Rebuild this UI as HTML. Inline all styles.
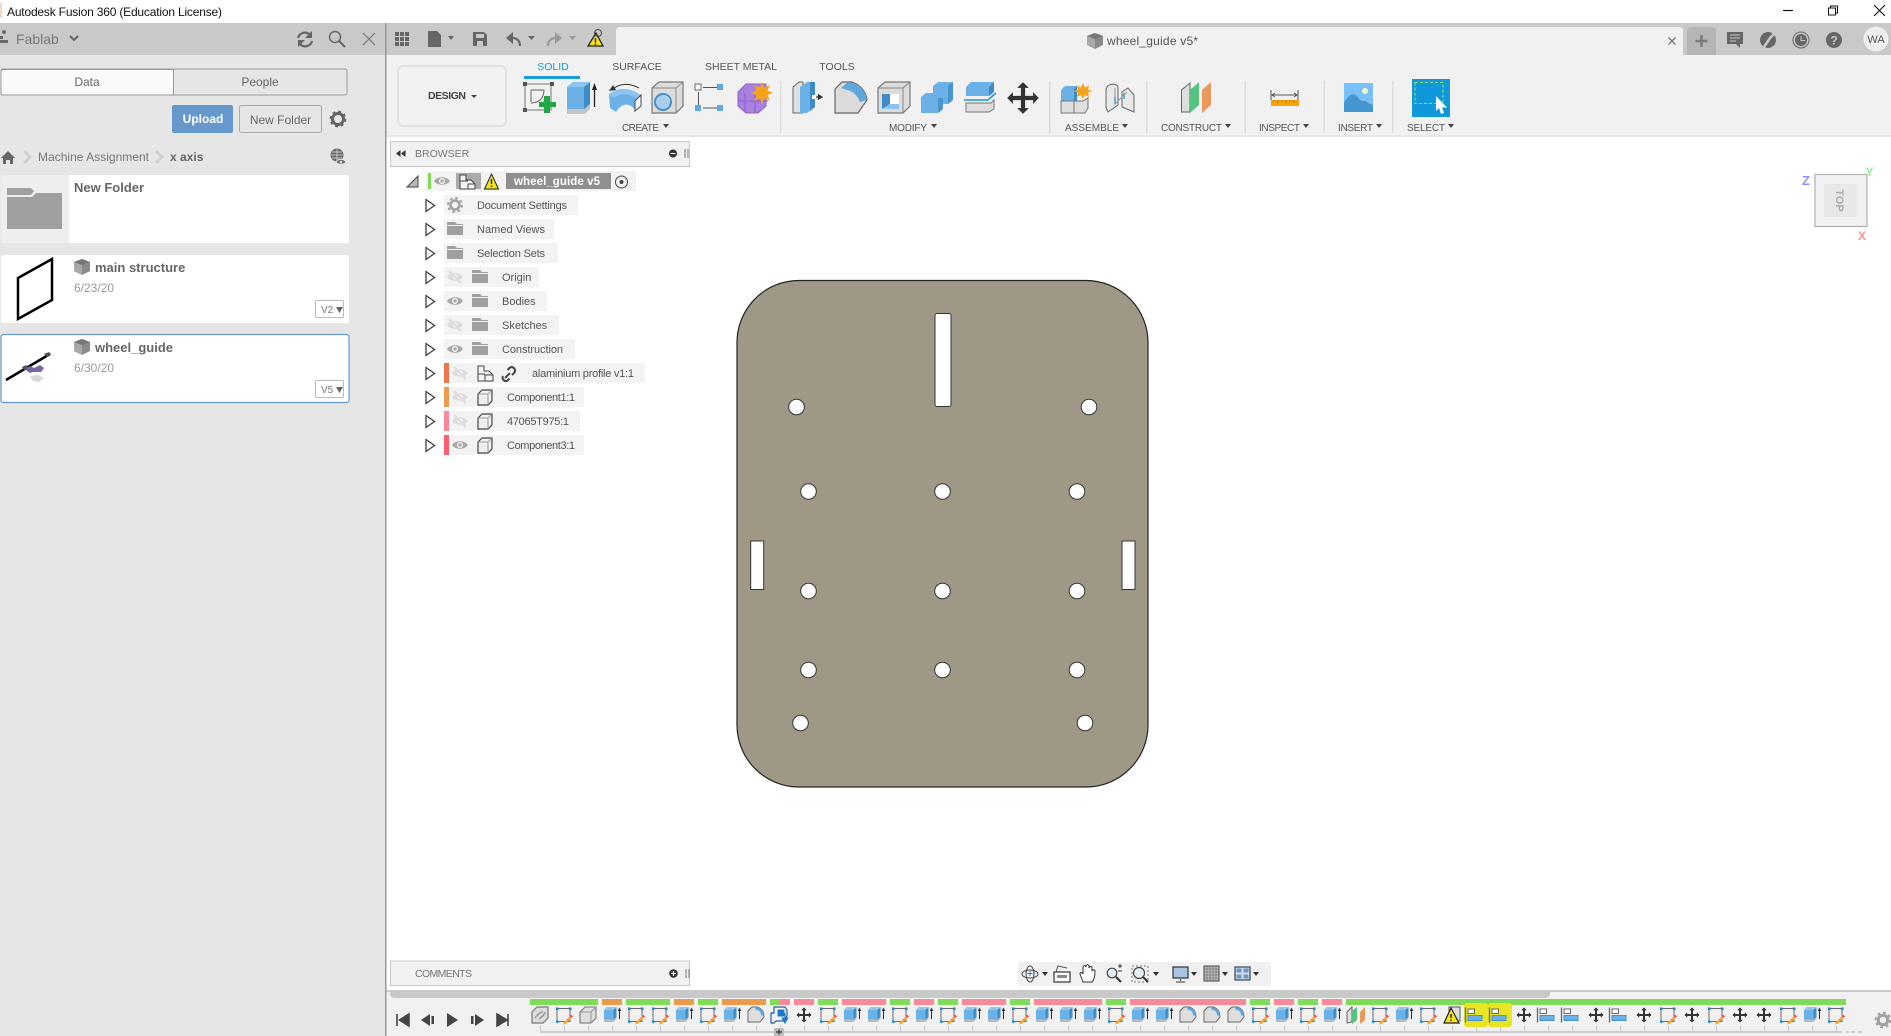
<!DOCTYPE html>
<html><head><meta charset="utf-8"><title>Autodesk Fusion 360</title>
<style>
html,body{margin:0;padding:0;background:#fff;width:1891px;height:1036px;overflow:hidden}
svg{display:block;position:absolute;left:0;top:0}
text{font-family:"Liberation Sans",sans-serif;font-size:11px;fill:#555}
.c{text-anchor:middle}
.tab{font-size:10.500px;fill:#555;text-anchor:middle}
.lb{font-size:10px;fill:#555}
.n{font-size:13px;font-weight:bold;fill:#666}
.d{font-size:12px;fill:#999}
</style></head><body>
<svg width="1891" height="1036" viewBox="0 0 1891 1036" xmlns="http://www.w3.org/2000/svg">
<defs>
<g id="sk"><path d="M-6 -6.500H7V6.500H-6Z" fill="none" stroke="#666" stroke-width="1"/><path d="M-7 -7.500h2.500v2.500h-2.500zM6 -7.500h2.500v2.500h-2.500zM-7 5.500h2.500v2.500h-2.500z" fill="#1e88d8"/><path d="M1 7l6-6 1.800 1.800-6 6-2.600.8z" fill="#f0a43c"/><path d="M7 1l1.300-1.300 1.800 1.800-1.300 1.300z" fill="#ec4a5a"/></g>
<g id="ex"><path d="M-8 -5L-5 -8H4.500V2L1.500 4.500H-8Z" fill="#6bb0e6"/><path d="M1.500 -5L4.500 -8V2L1.500 4.500Z" fill="#3d8cc8"/><path d="M-8 -5L-5 -8H4.500L1.500 -5Z" fill="#8fc6f0"/><path d="M-8 4.500H1.500L4.500 2V4L1.500 7H-8Z" fill="#bdbdbd"/><path d="M7.500 4V-6.500" stroke="#333" stroke-width="1.100"/><path d="M5.700 -4L7.500 -7.500L9.300 -4Z" fill="#333"/></g>
<g id="fi"><path d="M-8 -4L-4 -8H1C6 -6.500 8 -3 8 2L4 7H-8Z" fill="#dedede" stroke="#666" stroke-width="1"/><path d="M0 -8C5 -7 8 -4 8 1L5 0C5 -3 3 -5 -1 -5.500Z" fill="#5fa5dc"/></g>
<g id="mv"><path d="M0 -7.500L-2.800 -4.800H-1V-1H-4.800V-2.800L-7.500 0L-4.800 2.800V1H-1V4.800H-2.800L0 7.500L2.800 4.800H1V1H4.800V2.800L7.500 0L4.800 -2.800V-1H1V-4.800H2.800Z" fill="#333"/></g>
<g id="al"><path d="M-10.500 -7.500V7.500" stroke="#666" stroke-width="1.300"/><rect x="-8" y="-6" width="6.500" height="4.500" fill="#fff" stroke="#666"/><rect x="-8" y="0.500" width="14" height="5" fill="#6bb0e6" stroke="#4a90c8"/></g>
<g id="eye"><path d="M-8 0C-5 -5 5 -5 8 0C5 5 -5 5 -8 0Z" fill="#a8a8a8"/><circle r="3" fill="#f3f3f3"/><circle r="1.600" fill="#a8a8a8"/></g>
<g id="eyo"><path d="M-8 0C-5 -5 5 -5 8 0C5 5 -5 5 -8 0Z" fill="#dcdcdc"/><circle r="2.500" fill="#f3f3f3"/><path d="M-6 -6L6 6" stroke="#dcdcdc" stroke-width="2"/></g>
<g id="fo"><path d="M-8 -7H0L2 -5H8V-4H-8Z" fill="#a0a0a0"/><path d="M-8 -3H8V6H-8Z" fill="#a0a0a0"/></g>
<g id="exp"><path d="M-4 -6L4.500 0L-4 6Z" fill="#f8f8f8" stroke="#444" stroke-width="1.300"/></g>
<g id="cp"><path d="M-7 -3L-3 -7H7V4L3 8H-7Z" fill="#f0f0f0" stroke="#444" stroke-width="1.200"/><path d="M-7 -3H3V8M3 -3L7 -7" fill="none" stroke="#999"/></g>
<g id="cube"><path d="M0 -8L8 -5V4L0 8L-8 4V-5Z" fill="#8a8a8a"/><path d="M-8 -5L0 -2V8L-8 4Z" fill="#a8a8a8"/><path d="M0 -8L8 -5L0 -2L-8 -5Z" fill="#777"/></g>
</defs>

<!-- title bar -->
<rect width="1891" height="23" fill="#fff"/>
<rect x="0" y="3" width="2" height="15" fill="#f6d9c0"/>
<text x="7" y="16" style="font-size:12px;fill:#111" textLength="215">Autodesk Fusion 360 (Education License)</text>
<path d="M1783 10.500H1793" stroke="#111" stroke-width="1.200"/>
<path d="M1828.500 8H1835.500V15H1828.500ZM1830.500 8V6H1837.500V13H1835.500" fill="#fff" stroke="#111"/>
<path d="M1874 5L1885 16M1885 5L1874 16" stroke="#111" stroke-width="1.100"/>

<!-- left panel -->
<rect x="0" y="23" width="385" height="1013" fill="#e6e6e6"/>
<rect x="0" y="23" width="385" height="32" fill="#c9c9c9"/>
<rect x="385" y="23" width="1.500" height="1013" fill="#999"/>
<path d="M0 36h3v3H0zM4 34a2 2 0 1 1 .1 0zM0 40h8v3H0z" fill="#666"/>
<text x="16" y="44" style="font-size:14px;fill:#777">Fablab</text>
<path d="M70 36L74 40L78 36" fill="none" stroke="#666" stroke-width="2"/>
<path d="M298 38A7 7 0 0 1 310 35M312 41A7 7 0 0 1 300 44" fill="none" stroke="#666" stroke-width="2.200"/><path d="M312 31V38H305ZM298 47V40H305Z" fill="#666"/>
<circle cx="335" cy="37" r="5.500" fill="none" stroke="#666" stroke-width="1.500"/><path d="M339 41L345 47" stroke="#666" stroke-width="2"/>
<path d="M363 33L375 45M375 33L363 45" stroke="#777" stroke-width="1.200"/>

<rect x="1" y="69" width="346" height="26" rx="2" fill="#e6e6e6" stroke="#999"/>
<path d="M3 69.500H173.500V95H3A2 2 0 0 1 1 93V71.500A2 2 0 0 1 3 69.500Z" fill="#fafafa" stroke="#999"/>
<text x="87" y="86" class="c" style="font-size:12px;fill:#666">Data</text>
<text x="260" y="86" class="c" style="font-size:12px;fill:#666">People</text>
<rect x="172" y="105" width="61" height="28" rx="2" fill="#6698cc"/>
<text x="203" y="123" class="c" style="font-size:12px;font-weight:bold;fill:#fff">Upload</text>
<rect x="239.500" y="105.500" width="82" height="27" rx="2" fill="#e6e6e6" stroke="#aaa"/>
<text x="280.500" y="124" class="c" style="font-size:12px;fill:#666">New Folder</text>
<circle cx="338" cy="119" r="5.500" fill="none" stroke="#666" stroke-width="3"/><circle cx="338" cy="119" r="7.500" fill="none" stroke="#666" stroke-width="1.800" stroke-dasharray="2.800 3.100"/>
<path d="M1 158L8 151L15 158H13V164H10V160H6V164H3V158Z" fill="#666"/>
<path d="M24 151L30 157L24 163" fill="none" stroke="#d0d0d0" stroke-width="3"/>
<text x="38" y="161" style="font-size:12px;fill:#777" textLength="111">Machine Assignment</text>
<path d="M156 151L162 157L156 163" fill="none" stroke="#d0d0d0" stroke-width="3"/>
<text x="170" y="161" style="font-size:12px;font-weight:bold;fill:#666">x axis</text>
<circle cx="337" cy="155" r="6.500" fill="#666"/><path d="M331 155H343M337 149V161M332 152H342M332 158H342" stroke="#e6e6e6" stroke-width=".7"/>
<path d="M336 162C338 158.500 344 158.500 346 162C344 165 338 165 336 162Z" fill="#666" stroke="#e6e6e6"/><circle cx="341" cy="162" r="1.300" fill="#e6e6e6"/>

<!-- cards -->
<rect x="1" y="175" width="348" height="68" rx="2" fill="#fff"/>
<path d="M69 175H3a2 2 0 0 0-2 2V241a2 2 0 0 0 2 2H69Z" fill="#eee"/>
<path d="M7 188H31L34 191L31 195H7ZM7 193V229H62V193H36L32 197H7Z" fill="#a0a0a0"/><path d="M7 195.500H31.500L34 193" fill="none" stroke="#eee"/>
<text x="74" y="192" class="n">New Folder</text>

<rect x="1" y="255" width="348" height="68" rx="2" fill="#fff"/>
<path d="M18 278L52 259V300L18 319Z" fill="none" stroke="#000" stroke-width="2.500"/>
<use href="#cube" x="82" y="267"/>
<text x="95" y="272" class="n">main structure</text>
<text x="74" y="292" class="d">6/23/20</text>
<rect x="315.500" y="300.500" width="28" height="17" rx="1" fill="#fff" stroke="#bbb"/>
<text x="321" y="313" style="font-size:10px;fill:#777">V2</text>
<path d="M336 307H343L339.500 313Z" fill="#666"/>

<rect x="1" y="334.500" width="348" height="68" rx="2.500" fill="#fff" stroke="#6698cc" stroke-width="1.200"/>
<path d="M6 380L50 354" stroke="#000" stroke-width="2.500"/><path d="M44 354l5-2 2 2-4 3z" fill="#555"/>
<path d="M24 369l6-3 4 2 6-3 4 3-3 4-8 0-3 1z" fill="#7a64a8"/><path d="M30 376l8-1 6 3-5 4-6-1z" fill="#d8d8d8"/><path d="M22 367l4-2 2 3-4 2z" fill="#555"/>
<use href="#cube" x="82" y="347"/>
<text x="95" y="352" class="n">wheel_guide</text>
<text x="74" y="372" class="d">6/30/20</text>
<rect x="315.500" y="380.500" width="28" height="17" rx="1" fill="#fff" stroke="#bbb"/>
<text x="321" y="393" style="font-size:10px;fill:#777">V5</text>
<path d="M336 387H343L339.500 393Z" fill="#666"/>

<!-- top gray strip -->
<rect x="386.500" y="23" width="1505" height="32" fill="#c9c9c9"/>
<path d="M616 55V31Q616 27 620 27H1679Q1683 27 1683 31V55Z" fill="#f1f1f1"/>
<path d="M1687 55V31Q1687 27 1691 27H1712Q1716 27 1716 31V55Z" fill="#b5b5b5"/>
<path d="M1701.500 35V47M1695.500 41H1707.500" stroke="#7a7a7a" stroke-width="2.500"/>
<path d="M1668.500 37.500L1675.500 44.500M1675.500 37.500L1668.500 44.500" stroke="#777" stroke-width="1.300"/>
<path d="M395 32h4v4h-4zM400 32h4v4h-4zM405 32h4v4h-4zM395 37h4v4h-4zM400 37h4v4h-4zM405 37h4v4h-4zM395 42h4v4h-4zM400 42h4v4h-4zM405 42h4v4h-4z" fill="#666"/>
<path d="M428 31H437L441 35V47H428Z" fill="#666"/><path d="M448 36H454L451 40Z" fill="#666"/>
<path d="M473 32H484L487 35V46H473ZM476 34V38H484V34ZM477 41V46H483V41Z" fill="#666" fill-rule="evenodd"/>
<path d="M520 46C520 40 516 37 509 38" fill="none" stroke="#666" stroke-width="2.200"/><path d="M513 32L506 38L513 44Z" fill="#666"/><path d="M528 36H535L531.500 40Z" fill="#666"/>
<path d="M548 46C548 40 552 37 559 38" fill="none" stroke="#999" stroke-width="2.200"/><path d="M555 32L562 38L555 44Z" fill="#999"/><path d="M569 36H576L572.500 40Z" fill="#999"/>
<path d="M596 33L603 46H588Z" fill="#f2e21e" stroke="#222" stroke-width="1.300"/><path d="M595.500 38V42.500M595.500 43.500V45" stroke="#222" stroke-width="1.400"/><circle cx="598" cy="33" r="3.500" fill="none" stroke="#444"/>

<use href="#cube" x="1095" y="41"/>
<text x="1107" y="45" style="font-size:12px;fill:#555" textLength="91">wheel_guide v5*</text>

<path d="M1727 32H1743V44H1740V48L1736 44H1727Z" fill="#666"/><path d="M1730 35H1740M1730 38H1740M1730 41H1736" stroke="#c9c9c9"/>
<circle cx="1768" cy="40" r="8" fill="#666"/><path d="M1764 47L1770 38L1774 34" stroke="#c9c9c9" stroke-width="2.500"/>
<circle cx="1801" cy="40" r="8" fill="none" stroke="#666"/><circle cx="1801" cy="40" r="6" fill="#666"/><path d="M1801 36V40.500H1805" fill="none" stroke="#c9c9c9"/>
<circle cx="1834" cy="40" r="8" fill="#666"/><text x="1834" y="44.500" class="c" style="font-size:12px;font-weight:bold;fill:#c9c9c9">?</text>
<circle cx="1876" cy="39" r="12.500" fill="#eee"/><text x="1876" y="43" class="c" style="font-size:11px;fill:#555">WA</text>

<!-- toolbar -->
<rect x="386.500" y="55" width="1505" height="81" fill="#f1f1f1"/>
<rect x="386.500" y="135.500" width="1505" height="1.200" fill="#ddd"/>
<rect x="398" y="66" width="108" height="60" rx="5" fill="#f1f1f1" stroke="#ddd" stroke-width="1.500"/>
<text x="428" y="99" style="font-size:10.500px;font-weight:bold;fill:#444" textLength="38">DESIGN</text><path d="M471 95H477L474 98Z" fill="#444"/>

<text x="553" y="70" class="tab" style="fill:#1a9ad6">SOLID</text>
<rect x="524" y="76" width="56" height="3" fill="#1a9ad6"/>
<text x="637" y="70" class="tab">SURFACE</text>
<text x="741" y="70" class="tab">SHEET METAL</text>
<text x="837" y="70" class="tab">TOOLS</text>

<!-- create icons -->
<path d="M525 84H551V110H525Z" fill="none" stroke="#777" stroke-width="1"/>
<path d="M523 82h4v4h-4zM550 82h4v4h-4zM523 108h4v4h-4z" fill="#555"/>
<path d="M531 90V102M531 90H544M544 90C544 98 539 103 531 103" fill="none" stroke="#666"/>
<path d="M544 96h6v6h6v5h-6v6h-6v-6h-5v-5h5z" fill="#22a745"/>
<path d="M567 87L573 82H590V104L585 109H567Z" fill="#6bb0e6"/><path d="M584 87L590 82V104L584 109Z" fill="#3d8cc8"/><path d="M567 87L573 82H590L584 87Z" fill="#8cc4f0"/><path d="M567 109H585L590 105V109L585 114H567Z" fill="#c4c4c4"/>
<path d="M594.500 107V88" stroke="#222" stroke-width="1.300"/><path d="M592 90L594.500 83L597 90Z" fill="#222"/>
<path d="M609 94C617 87 632 87 641 96L635 110C630 102 621 103 616 112L610 108Z" fill="#6bb0e6"/><path d="M609 94C617 87 632 87 641 96L637 99C630 93 620 93 613 98Z" fill="#8cc4f0"/><path d="M635 101L641 95V106L635 111Z" fill="#fff" stroke="#444"/>
<path d="M613 89C620 83 630 83 639 88" fill="none" stroke="#333" stroke-width="1"/><path d="M609 91L613 85L616 90Z" fill="#333"/>
<path d="M652 88L659 82H683V106L676 113H652Z" fill="#dcdcdc" stroke="#777" stroke-width="1.200"/><path d="M652 88H676V113M676 88L683 82" fill="none" stroke="#888"/>
<circle cx="663" cy="102" r="8" fill="#a8d0ee" stroke="#4a90c8" stroke-width="2"/><path d="M663 95A7 7 0 0 1 670 102A9 9 0 0 0 663 95Z" fill="#fff"/>
<path d="M703 87.500H717M698.500 92V105M703 108H717" stroke="#555" stroke-width="1"/>
<rect x="695" y="84" width="6" height="6" fill="#fff" stroke="#666"/>
<path d="M717 84h6v6h-6zM695 105h6v6h-6zM717 105h6v6h-6z" fill="#5fa8e0"/>
<path d="M738 92L746 84H766V106L758 113H746L738 106Z" fill="#a880e0" stroke="#8a62c8"/><path d="M745 93V112M738 101H768M755 93V112" stroke="#8a62c8"/>
<path d="M762 82L764.500 87.500L770 85L767.500 90.500L773 93L767.500 95L770 101L764.500 98L762 104L760 98L754 101L756.500 95L751 93L756.500 90.500L754 85L760 87.500Z" fill="#f6a31c"/>
<text x="622" y="131" class="lb" textLength="37">CREATE</text><path d="M663 124H669L666 128Z" fill="#444"/>
<rect x="780" y="81" width="1.500" height="52" fill="#ddd"/>

<!-- modify icons -->
<path d="M793 87L799 82H803V113H793Z" fill="#e0e0e0" stroke="#666"/><path d="M800 87L807 82H815V107L807 113H800Z" fill="#6bb0e6"/><path d="M810 82H815V107L810 111Z" fill="#3d8cc8"/>
<path d="M812 97H822M818 94.500L822 97L818 99.500" fill="#333" stroke="#333" stroke-width="1.200"/><rect x="812" y="95" width="4" height="4" fill="#fff"/>
<path d="M835 89L842 82H852C860 85 866 91 867 100L858 113H835Z" fill="#dcdcdc" stroke="#666" stroke-width="1.200"/><path d="M848 82C858 83 866 90 867 100L860 102C858 96 853 91 847 90L841 88Z" fill="#5fa8dc"/>
<path d="M878 88L885 82H910V106L903 113H878Z" fill="#dcdcdc" stroke="#777" stroke-width="1.200"/><path d="M878 88H903V113M903 88L910 82" fill="none" stroke="#888"/>
<rect x="882" y="94" width="17" height="15" fill="#fff"/><path d="M882 94H890V104L882 109Z" fill="#3d8cc8"/><path d="M882 109L890 104H899V109Z" fill="#8cc4f0"/>
<path d="M921 97L926 93H933V86L938 82H953V100L948 104H943V109L938 113H921Z" fill="#6bb0e6"/><path d="M948 86L953 82V100L948 104Z" fill="#4a94cc"/><path d="M938 98L943 98V109L938 113Z" fill="#4a94cc"/>
<path d="M966 87L971 82H994V92L989 96H966Z" fill="#6bb0e6"/><path d="M989 87L994 82V92L989 96Z" fill="#3d8cc8"/>
<path d="M964 100H988L996 93" fill="none" stroke="#1a9ad6" stroke-width="1.500"/>
<path d="M966 103H991L994 100V109L989 112H966Z" fill="#dedede" stroke="#777"/>
<use href="#mv" transform="translate(1023,98) scale(2.100)"/>
<text x="889" y="131" class="lb" textLength="38">MODIFY</text><path d="M931 124H937L934 128Z" fill="#444"/>
<rect x="1049" y="81" width="1.500" height="52" fill="#ddd"/>

<!-- assemble -->
<path d="M1061 90L1065 86H1077V101H1061Z" fill="#6bb0e6"/><path d="M1074 89L1077 86V101L1074 101Z" fill="#3d8cc8"/><path d="M1061 101H1074V113H1061Z" fill="#dedede" stroke="#777"/><path d="M1074 101H1083L1088 98V108L1085 113H1074Z" fill="#dedede" stroke="#777"/>
<path d="M1083 83L1085 87.500L1089 85.500L1088 90L1093 91L1088 92.500L1089 97L1085 95L1083 99L1081 95L1077 97L1078 92.500L1073 91L1078 90L1077 85.500L1081 87.500Z" fill="#f6a31c"/>
<path d="M1106 90C1106 84 1116 82 1118 87V105L1108 112L1106 107Z" fill="#e8e8e8" stroke="#666"/><path d="M1122 92V107L1134 112V95L1128 88L1122 92Z" fill="#e8e8e8" stroke="#666"/><path d="M1115 88V104L1127 92" fill="none" stroke="#999"/><path d="M1115 97V104M1124 93V99" stroke="#1a9ad6" stroke-width="1.200"/>
<text x="1065" y="131" class="lb" textLength="54">ASSEMBLE</text><path d="M1122 124H1128L1125 128Z" fill="#444"/>
<rect x="1146" y="81" width="1.500" height="52" fill="#ddd"/>

<!-- construct -->
<path d="M1181.500 90L1190 83V112H1181.500Z" fill="#dedede" stroke="#666" stroke-width="1"/>
<path d="M1190 90L1199 82V105L1190 113Z" fill="#55c47e"/>
<path d="M1202 90L1211 82V105L1202 113Z" fill="#e89a5e"/>
<text x="1161" y="131" class="lb" textLength="61">CONSTRUCT</text><path d="M1225 124H1231L1228 128Z" fill="#444"/>
<rect x="1244.500" y="81" width="1.500" height="52" fill="#ddd"/>

<!-- inspect -->
<path d="M1271 90V100M1298 90V100M1272 95H1297M1275 93L1272 95L1275 97M1294 93L1297 95L1294 97" fill="none" stroke="#555" stroke-width="1"/>
<rect x="1271" y="100" width="28" height="6" fill="#f4a40e"/><path d="M1274 100v2M1278 100v3M1282 100v2M1286 100v3M1290 100v2M1294 100v3" stroke="#a87000" stroke-width=".8"/>
<text x="1259" y="131" class="lb" textLength="41">INSPECT</text><path d="M1303 124H1309L1306 128Z" fill="#444"/>
<rect x="1323.500" y="81" width="1.500" height="52" fill="#ddd"/>

<!-- insert -->
<rect x="1344" y="83" width="29" height="29" fill="#79c0f8"/><path d="M1344 112V103C1350 92 1355 92 1360 100C1364 102 1366 100 1368 103L1373 105V112Z" fill="#4595d0"/><circle cx="1365" cy="91" r="3" fill="#f6f6c8"/>
<text x="1338" y="131" class="lb" textLength="35">INSERT</text><path d="M1376 124H1382L1379 128Z" fill="#444"/>
<rect x="1392" y="81" width="1.500" height="52" fill="#ddd"/>

<!-- select -->
<rect x="1412" y="79" width="38" height="38" fill="#0f98da"/>
<rect x="1415" y="82.500" width="28" height="21" fill="none" stroke="#8fe07e" stroke-dasharray="3 2"/>
<path d="M1436 96V111L1439 108L1441 114L1444 113L1442 107.500H1447Z" fill="#fff"/>
<text x="1407" y="131" class="lb" textLength="38">SELECT</text><path d="M1448 124H1454L1451 128Z" fill="#444"/>

<!-- view cube -->
<text x="1806" y="185" class="c" style="font-size:13px;font-weight:bold;fill:#9090ff">Z</text>
<text x="1869.500" y="176" class="c" style="font-size:12px;font-weight:bold;fill:#90f090">Y</text>
<text x="1862" y="240" class="c" style="font-size:12px;font-weight:bold;fill:#ff9090">X</text>
<rect x="1815" y="174.500" width="52" height="52" fill="#f1f1f1" stroke="#b0b0b0" stroke-width="1.200"/>
<rect x="1824" y="184" width="33" height="33" fill="#e8e8e8"/>
<text transform="translate(1836,200.500) rotate(90)" class="c" style="font-size:11px;font-weight:bold;fill:#aaa">TOP</text>

<!-- browser -->
<rect x="390.500" y="141.500" width="299" height="25" fill="#f1f1f1" stroke="#c8c8c8"/>
<path d="M396 153.500L400.500 150V157ZM401 153.500L405.500 150V157Z" fill="#333"/>
<text x="415" y="157" style="font-size:10.500px;fill:#777">BROWSER</text>
<circle cx="673" cy="153.500" r="4" fill="#333"/><path d="M670.500 153.500H675.500" stroke="#f1f1f1" stroke-width="1.200"/>
<path d="M685 149V158M688 149V158" stroke="#777"/>

<path d="M407 187L418 176V187Z" fill="#b8b8b8" stroke="#444" stroke-width="1"/>
<rect x="426" y="171" width="210" height="20" fill="#f3f3f3"/>
<rect x="428" y="173" width="3" height="16" fill="#7fdb58"/>
<use href="#eye" x="442" y="181"/>
<rect x="456" y="173" width="25" height="16" fill="#aaa"/>
<path d="M460 175H466V180H471L475 184V189H460Z" fill="#f3f3f3" stroke="#444" stroke-width="1"/><path d="M468 189V184H475M460 181H468" fill="none" stroke="#444"/>
<path d="M491.500 174L498.500 189H484.500Z" fill="#f2e21e" stroke="#222" stroke-width="1"/><path d="M491.500 179V184M491.500 185.500V187" stroke="#222" stroke-width="1.300"/>
<rect x="506" y="173" width="105" height="16" fill="#8f8f8f"/>
<text x="557" y="185" class="c" style="font-size:11.500px;font-weight:bold;fill:#fff" textLength="86">wheel_guide v5</text>
<circle cx="621.500" cy="182" r="6" fill="none" stroke="#444"/><circle cx="621.500" cy="182" r="2" fill="#444"/>

<!-- rows -->
<use href="#exp" x="430" y="205.500"/><rect x="444" y="195" width="134" height="20" fill="#f3f3f3"/>
<circle cx="455" cy="205" r="4.500" fill="none" stroke="#a0a0a0" stroke-width="2.500"/><circle cx="455" cy="205" r="7" fill="none" stroke="#a0a0a0" stroke-width="2" stroke-dasharray="2.600 2.900"/>
<text x="477" y="209" textLength="90">Document Settings</text>

<use href="#exp" x="430" y="229.500"/><rect x="444" y="219" width="110" height="20" fill="#f3f3f3"/><use href="#fo" x="455" y="229"/>
<text x="477" y="233" textLength="68">Named Views</text>

<use href="#exp" x="430" y="253.500"/><rect x="444" y="243" width="114" height="20" fill="#f3f3f3"/><use href="#fo" x="455" y="253"/>
<text x="477" y="257" textLength="68">Selection Sets</text>

<use href="#exp" x="430" y="277.500"/><rect x="444" y="267" width="95" height="20" fill="#f3f3f3"/><use href="#eyo" x="455" y="277"/><use href="#fo" x="480" y="277"/>
<text x="502" y="281">Origin</text>

<use href="#exp" x="430" y="301.500"/><rect x="444" y="291" width="103" height="20" fill="#f3f3f3"/><use href="#eye" x="455" y="301"/><use href="#fo" x="480" y="301"/>
<text x="502" y="305">Bodies</text>

<use href="#exp" x="430" y="325.500"/><rect x="444" y="315" width="115" height="20" fill="#f3f3f3"/><use href="#eyo" x="455" y="325"/><use href="#fo" x="480" y="325"/>
<text x="502" y="329">Sketches</text>

<use href="#exp" x="430" y="349.500"/><rect x="444" y="339" width="131" height="20" fill="#f3f3f3"/><use href="#eye" x="455" y="349"/><use href="#fo" x="480" y="349"/>
<text x="502" y="353" textLength="61">Construction</text>

<use href="#exp" x="430" y="373.500"/><rect x="444" y="363" width="201" height="20" fill="#f3f3f3"/><rect x="444" y="363" width="5" height="20" fill="#ec7650"/><use href="#eyo" x="460" y="373"/>
<path d="M478 366H484V371H489L493 375V381H478Z" fill="#f3f3f3" stroke="#444" stroke-width="1"/><path d="M485 381V375H493M478 374H485" fill="none" stroke="#444"/>
<path d="M505 378L510 373M503 376A3.500 3.500 0 0 0 507 381L509.500 378.500M512 375L514.500 372.500A3.500 3.500 0 0 0 510 367.500L507.500 370" fill="none" stroke="#444" stroke-width="2"/>
<text x="532" y="377" textLength="102">alaminium profile v1:1</text>

<use href="#exp" x="430" y="397.500"/><rect x="444" y="387" width="140" height="20" fill="#f3f3f3"/><rect x="444" y="387" width="5" height="20" fill="#e99b4e"/><use href="#eyo" x="460" y="397"/><use href="#cp" x="485" y="397"/>
<text x="507" y="401" textLength="68">Component1:1</text>

<use href="#exp" x="430" y="421.500"/><rect x="444" y="411" width="136" height="20" fill="#f3f3f3"/><rect x="444" y="411" width="5" height="20" fill="#f68a99"/><use href="#eyo" x="460" y="421"/><use href="#cp" x="485" y="421"/>
<text x="507" y="425" textLength="62">47065T975:1</text>

<use href="#exp" x="430" y="445.500"/><rect x="444" y="435" width="140" height="20" fill="#f3f3f3"/><rect x="444" y="435" width="5" height="20" fill="#ff6070"/><use href="#eye" x="460" y="445"/><use href="#cp" x="485" y="445"/>
<text x="507" y="449" textLength="68">Component3:1</text>

<!-- plate -->
<path d="M799 280.500H1086A62 62 0 0 1 1148 342.500V725A62 62 0 0 1 1086 787H799A62 62 0 0 1 737 725V342.500A62 62 0 0 1 799 280.500Z" fill="#9f9887" stroke="#222" stroke-width="1.200"/>
<rect x="935" y="313.500" width="16" height="93" rx="2" fill="#fff" stroke="#333" stroke-width="1"/>
<rect x="750.700" y="541" width="13" height="48.500" fill="#fff" stroke="#333" stroke-width="1"/>
<rect x="1122" y="541" width="13" height="48.500" fill="#fff" stroke="#333" stroke-width="1"/>
<g fill="#fff" stroke="#333" stroke-width="1">
<circle cx="796.500" cy="407" r="7.800"/><circle cx="1089" cy="407" r="7.800"/>
<circle cx="808.500" cy="491.500" r="7.800"/><circle cx="942.500" cy="491.500" r="7.800"/><circle cx="1077" cy="491.500" r="7.800"/>
<circle cx="808.500" cy="591" r="7.800"/><circle cx="942.500" cy="591" r="7.800"/><circle cx="1077" cy="591" r="7.800"/>
<circle cx="808.500" cy="670" r="7.800"/><circle cx="942.500" cy="670" r="7.800"/><circle cx="1077" cy="670" r="7.800"/>
<circle cx="800.500" cy="723" r="7.800"/><circle cx="1085" cy="723" r="7.800"/>
</g>

<!-- comments -->
<rect x="390.500" y="961" width="299" height="24.500" fill="#f1f1f1" stroke="#c8c8c8"/>
<text x="415" y="977" style="font-size:10.500px;fill:#777" textLength="57">COMMENTS</text>
<circle cx="673.500" cy="973.500" r="4.300" fill="#333"/><path d="M671 973.500H676M673.500 971V976" stroke="#f1f1f1" stroke-width="1.200"/>
<path d="M686 969V978M689 969V978" stroke="#777"/>

<!-- bottom nav bar -->
<rect x="1018" y="962" width="253" height="24" fill="#f1f1f1"/>
<ellipse cx="1030" cy="974" rx="8" ry="4" fill="none" stroke="#444"/><ellipse cx="1030" cy="974" rx="4" ry="8" fill="none" stroke="#444"/><path d="M1030 971V976M1027.500 973.500H1032.500" stroke="#1a88d8"/>
<path d="M1042 972H1048L1045 976Z" fill="#333"/>
<rect x="1054" y="972" width="16" height="10" fill="#fff" stroke="#333" stroke-width="1.200"/><rect x="1057" y="975" width="10" height="3" fill="#888"/><path d="M1056 972L1058 966L1067 968" fill="none" stroke="#555"/>
<path d="M1083 982L1080 974C1080 972 1082 972 1083 974V967C1084 965 1085 965 1086 967V966C1087 964 1088 964 1089 966V968C1090 966 1092 966 1092 968V971C1093 969 1095 970 1095 971C1095 976 1094 980 1092 982Z" fill="#fff" stroke="#333" stroke-width="1"/>
<circle cx="1112" cy="973" r="4.800" fill="#e2eef8" stroke="#444" stroke-width="1.200"/><path d="M1116 977L1121 982" stroke="#333" stroke-width="2"/><path d="M1118 966H1122M1120 964V968M1118 971H1122" stroke="#333"/>
<rect x="1132" y="966" width="16" height="16" fill="none" stroke="#777" stroke-dasharray="2 2"/><circle cx="1139" cy="973" r="5.500" fill="#e2eef8" stroke="#444" stroke-width="1.200"/><path d="M1143 977L1148 982" stroke="#333" stroke-width="2"/>
<path d="M1153 972H1159L1156 976Z" fill="#333"/>
<rect x="1173" y="967" width="15" height="11" fill="#a8c4e4" stroke="#333" stroke-width="1.200"/><path d="M1180.500 978V981M1176 982H1185" stroke="#777" stroke-width="1.500"/>
<path d="M1191 972H1197L1194 976Z" fill="#333"/>
<rect x="1204" y="966" width="15" height="15" fill="#bbb" stroke="#444"/><path d="M1207 966V981M1210 966V981M1213 966V981M1216 966V981M1204 969H1219M1204 972H1219M1204 975H1219M1204 978H1219" stroke="#666" stroke-width=".6"/>
<path d="M1222 972H1228L1225 976Z" fill="#333"/>
<rect x="1235" y="967" width="15" height="13" fill="#d4e0ee" stroke="#345" stroke-width="1.200"/><path d="M1236.500 968.500h5v4h-5zM1243.500 968.500h5v4h-5zM1236.500 974.500h5v4h-5zM1243.500 974.500h5v4h-5z" fill="#6e94c0"/>
<path d="M1253 972H1259L1256 976Z" fill="#333"/>

<!-- timeline -->
<rect x="386.500" y="990" width="1505" height="46" fill="#f1f1f1"/>
<rect x="386.500" y="990" width="1505" height="2" fill="#c9c9c9"/>
<path d="M390 990H1550V993Q1550 998 1545 998H395Q390 998 390 993Z" fill="#c9c9c9"/>
<path d="M397 1014V1026M409 1014V1026L399.500 1020Z" fill="#444" stroke="#444" stroke-width="1.600"/>
<path d="M421 1020L430 1014V1026Z" fill="#444"/><rect x="431.500" y="1016" width="2.500" height="8" fill="#444"/>
<path d="M447 1013L458 1020L447 1027Z" fill="#444"/>
<rect x="471" y="1016" width="2.500" height="8" fill="#444"/><path d="M475 1014L484 1020L475 1026Z" fill="#444"/>
<path d="M497 1014V1026L507 1020ZM508 1014V1026" fill="#444" stroke="#444" stroke-width="1.600"/>

<!-- colored segments -->
<g fill="#7fdb58">
<rect x="530" y="999" width="68" height="6"/><rect x="626" y="999" width="44" height="6"/><rect x="698" y="999" width="20" height="6"/><rect x="770" y="999" width="10" height="6"/><rect x="818" y="999" width="20" height="6"/><rect x="890" y="999" width="20" height="6"/><rect x="938" y="999" width="20" height="6"/><rect x="1010" y="999" width="20" height="6"/><rect x="1106" y="999" width="20" height="6"/><rect x="1250" y="999" width="20" height="6"/><rect x="1298" y="999" width="20" height="6"/><rect x="1346" y="999" width="500" height="6"/>
</g>
<g fill="#e99b4e"><rect x="602" y="999" width="20" height="6"/><rect x="674" y="999" width="20" height="6"/><rect x="722" y="999" width="44" height="6"/></g>
<g fill="#f68a99"><rect x="780" y="999" width="10" height="6"/><rect x="794" y="999" width="20" height="6"/><rect x="842" y="999" width="44" height="6"/><rect x="914" y="999" width="20" height="6"/><rect x="962" y="999" width="44" height="6"/><rect x="1034" y="999" width="68" height="6"/><rect x="1130" y="999" width="116" height="6"/><rect x="1274" y="999" width="20" height="6"/><rect x="1322" y="999" width="20" height="6"/></g>

<!-- ticks -->
<rect x="540" y="1031" width="1302" height="2" fill="#ccc"/>
<path d="M1846 1032h3M1851 1032h4M1858 1032h4" stroke="#ccc" stroke-width="2"/>
<path d="M540.500 1026V1031M564.500 1026V1031M588.500 1026V1031M612.500 1026V1031M636.500 1026V1031M660.500 1026V1031M684.500 1026V1031M708.500 1026V1031M732.500 1026V1031M756.500 1026V1031M780.500 1026V1031M804.500 1026V1031M828.500 1026V1031M852.500 1026V1031M876.500 1026V1031M900.500 1026V1031M924.500 1026V1031M948.500 1026V1031M972.500 1026V1031M996.500 1026V1031M1020.500 1026V1031M1044.500 1026V1031M1068.500 1026V1031M1092.500 1026V1031M1116.500 1026V1031M1140.500 1026V1031M1164.500 1026V1031M1188.500 1026V1031M1212.500 1026V1031M1236.500 1026V1031M1260.500 1026V1031M1284.500 1026V1031M1308.500 1026V1031M1332.500 1026V1031M1356.500 1026V1031M1380.500 1026V1031M1404.500 1026V1031M1428.500 1026V1031M1452.500 1026V1031M1476.500 1026V1031M1500.500 1026V1031M1524.500 1026V1031M1548.500 1026V1031M1572.500 1026V1031M1596.500 1026V1031M1620.500 1026V1031M1644.500 1026V1031M1668.500 1026V1031M1692.500 1026V1031M1716.500 1026V1031M1740.500 1026V1031M1764.500 1026V1031M1788.500 1026V1031M1812.500 1026V1031M1836.500 1026V1031" stroke="#ccc" stroke-width="1.200"/>
<rect x="774" y="1028" width="10" height="8" rx="1.500" fill="#bbb"/><path d="M776 1032H782M779 1029.500V1034.500" stroke="#333" stroke-width="1.200"/>

<!-- timeline icons -->
<g transform="translate(540,1015)"><path d="M-8 -3L-3 -8H8V3L3 8H-8Z" fill="#ddd" stroke="#777" stroke-width="1.200"/><path d="M-5 3C-2 -1 1 -3 3 -3M-1 4C2 2 5 -1 5 -3" fill="none" stroke="#999" stroke-width="1.500"/></g>
<use href="#sk" x="563" y="1015"/>
<g transform="translate(588,1015)"><path d="M-8 -3L-3 -8H8V3L3 8H-8Z" fill="#dedede" stroke="#777" stroke-width="1.100"/><path d="M-8 -3H3V8M3 -3L8 -8" fill="none" stroke="#999"/></g>
<use href="#ex" x="612" y="1015"/><use href="#sk" x="635" y="1015"/><use href="#sk" x="659" y="1015"/><use href="#ex" x="684" y="1015"/><use href="#sk" x="707" y="1015"/><use href="#ex" x="732" y="1015"/><use href="#fi" x="756" y="1015"/>
<g transform="translate(780,1015)"><path d="M-9 8V-2L-6 -2V-8H5L7 -5V1L3 6H-4L-6 8Z" fill="#f4f4f4" stroke="#2a5a9a" stroke-width="1.200"/><path d="M5 -2V6M2 3L5 8L8 3ZM-2 -5H4V1H-2Z" fill="#1a78c8" stroke="#1a78c8"/></g>
<use href="#mv" x="804" y="1015"/><use href="#sk" x="827" y="1015"/><use href="#ex" x="852" y="1015"/><use href="#ex" x="876" y="1015"/><use href="#sk" x="899" y="1015"/><use href="#ex" x="924" y="1015"/><use href="#sk" x="947" y="1015"/><use href="#ex" x="972" y="1015"/><use href="#ex" x="996" y="1015"/><use href="#sk" x="1019" y="1015"/><use href="#ex" x="1044" y="1015"/><use href="#ex" x="1068" y="1015"/><use href="#ex" x="1092" y="1015"/><use href="#sk" x="1115" y="1015"/><use href="#ex" x="1140" y="1015"/><use href="#ex" x="1164" y="1015"/><use href="#fi" x="1188" y="1015"/><use href="#fi" x="1212" y="1015"/><use href="#fi" x="1236" y="1015"/><use href="#sk" x="1259" y="1015"/><use href="#ex" x="1284" y="1015"/><use href="#sk" x="1307" y="1015"/><use href="#ex" x="1332" y="1015"/>
<g transform="translate(1356,1015)"><path d="M-9 -3L-4 -8V7L-9 8Z" fill="#dedede" stroke="#666"/><path d="M-4 -4L1 -8V5L-4 9Z" fill="#55c47e"/><path d="M4 -3L9 -8V5L4 9Z" fill="#e89a5e"/></g>
<use href="#sk" x="1379" y="1015"/><use href="#ex" x="1404" y="1015"/><use href="#sk" x="1427" y="1015"/>
<g transform="translate(1452,1015)"><path d="M-3 -8H8V6H-3Z" fill="#ddd" stroke="#555"/><path d="M-1 -7L7 8H-8Z" fill="#f2e21e" stroke="#222" stroke-width="1.200"/><path d="M-1 -1V3M-1 4.500V6" stroke="#222" stroke-width="1.400"/></g>
<rect x="1464" y="1003" width="24" height="24" rx="3" fill="#e8e620"/><rect x="1488" y="1003" width="24" height="24" rx="3" fill="#e8e620"/>
<use href="#al" x="1476" y="1015"/><use href="#al" x="1500" y="1015"/><use href="#mv" x="1524" y="1015"/><use href="#al" x="1548" y="1015"/><use href="#al" x="1572" y="1015"/><use href="#mv" x="1596" y="1015"/><use href="#al" x="1620" y="1015"/><use href="#mv" x="1644" y="1015"/><use href="#sk" x="1667" y="1015"/><use href="#mv" x="1692" y="1015"/><use href="#sk" x="1715" y="1015"/><use href="#mv" x="1740" y="1015"/><use href="#mv" x="1764" y="1015"/><use href="#sk" x="1787" y="1015"/><use href="#ex" x="1812" y="1015"/><use href="#sk" x="1835" y="1015"/>

<circle cx="1883" cy="1020" r="4.800" fill="none" stroke="#a0a0a0" stroke-width="3"/><circle cx="1883" cy="1020" r="7.300" fill="none" stroke="#a0a0a0" stroke-width="2" stroke-dasharray="2.800 2.900"/>
</svg>
</body></html>
